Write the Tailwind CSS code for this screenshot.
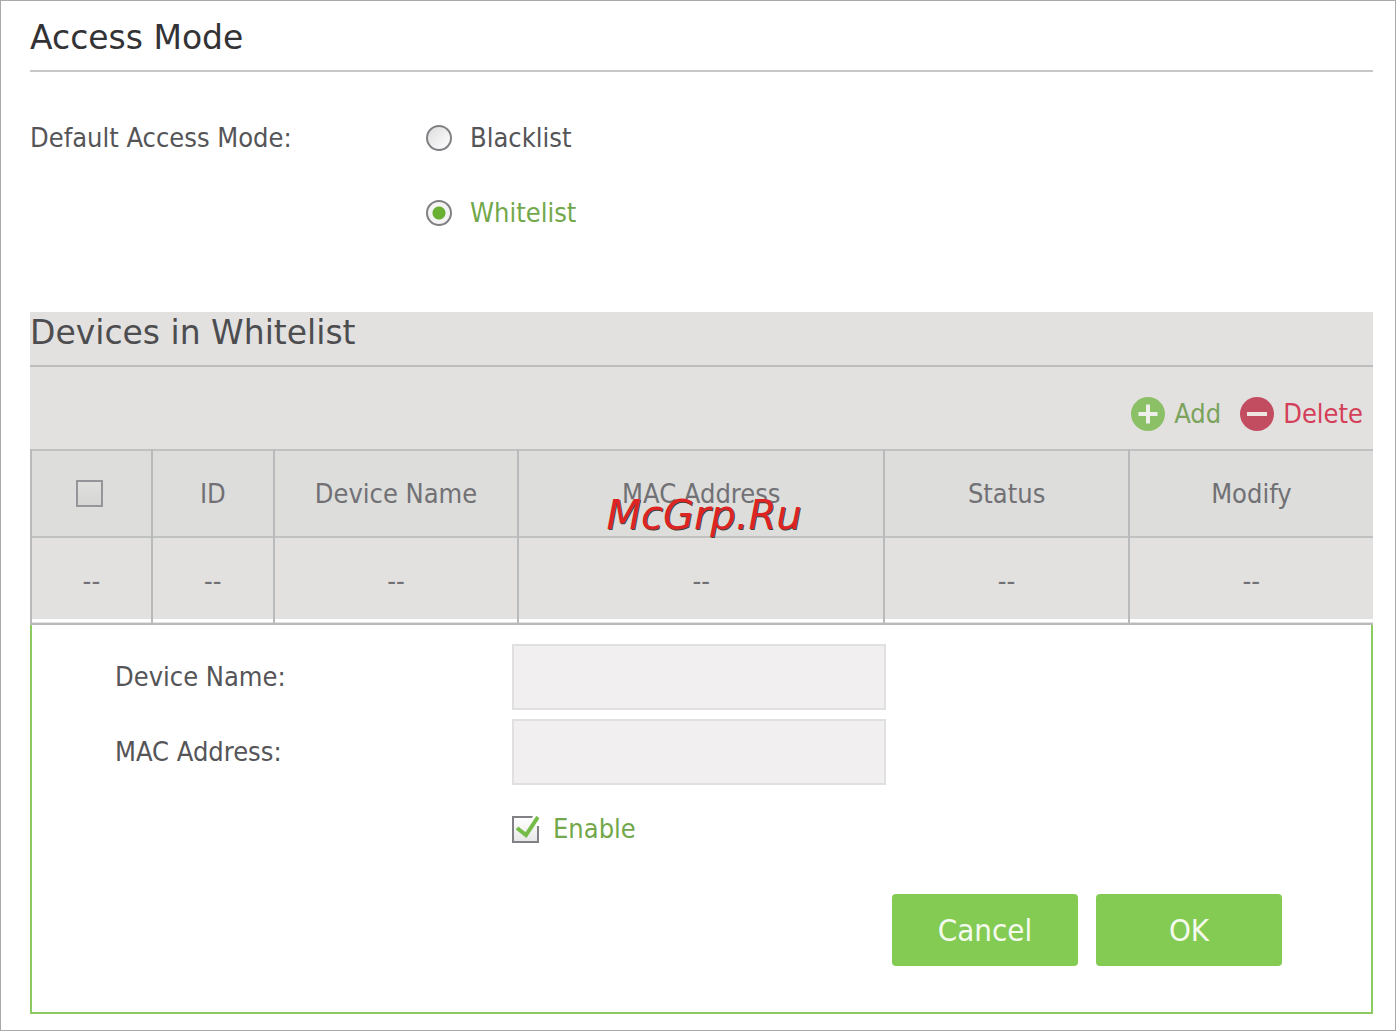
<!doctype html>
<html lang="en">

<head>
    <meta charset="UTF-8">
    <meta name="viewport" content="width=device-width, initial-scale=1.0">
    <script src="https://cdn.jsdelivr.net/npm/@tailwindcss/browser@4"></script>
    <title>Access Mode</title>
</head>

<body class="bg-white font-['DejaVu_Sans_Condensed','DejaVu_Sans',sans-serif] text-[27px] leading-8 text-[#555558]">
    <main class="relative min-h-screen border border-[#aaaaaa] pl-[29px] pr-[22px] pt-[17px] pb-3">
        <!-- Access Mode -->
        <h1 class="border-b-2 border-[#c8c8c8] pb-3 font-['DejaVu_Sans',sans-serif] text-[33px] leading-10 text-[#333336]">Access Mode</h1>
        <div role="radiogroup" aria-labelledby="modeLabel" class="flex pt-[50px]">
            <div id="modeLabel" class="w-[396px] shrink-0">Default Access Mode:</div>
            <div class="flex flex-col gap-[43px]">
                <label class="flex items-center gap-[18px]">
                    <input type="radio" name="mode" class="size-[26px] appearance-none rounded-full border-2 border-[#808085] bg-linear-to-br from-[#dddddd] to-white checked:bg-[radial-gradient(circle,#69b033_6px,#f4f4f4_7px)]">
                    Blacklist
                </label>
                <label class="flex items-center gap-[18px] text-[#72a84b]">
                    <input type="radio" name="mode" checked class="size-[26px] appearance-none rounded-full border-2 border-[#808085] bg-linear-to-br from-[#dddddd] to-white checked:bg-[radial-gradient(circle,#69b033_6px,#f4f4f4_7px)]">
                    Whitelist
                </label>
            </div>
        </div>

        <!-- Devices in Whitelist -->
        <section class="mt-[83px] bg-[#e2e1df]">
            <h2 class="border-b-2 border-[#bbbdbe] pb-3 pt-px font-['DejaVu_Sans',sans-serif] text-[33px] leading-10 text-[#4d4d50]">Devices in Whitelist</h2>
            <div class="flex justify-end gap-[19px] pb-[18px] pr-[10px] pt-[30px]">
                <button type="button" class="flex items-center gap-[9px] text-[#7ba35c]">
                    <svg class="size-[34px]" viewBox="0 0 34 34">
                        <circle cx="17" cy="17" r="17" fill="#8bc067" />
                        <path d="M17 7.5v19M7.5 17h19" stroke="#eeeeea" stroke-width="4" />
                    </svg>
                    Add
                </button>
                <button type="button" class="flex items-center gap-[9px] text-[#d43e58]">
                    <svg class="size-[34px]" viewBox="0 0 34 34">
                        <circle cx="17" cy="17" r="17" fill="#c34d60" />
                        <path d="M7 17h20" stroke="#eee4e2" stroke-width="4" />
                    </svg>
                    Delete
                </button>
            </div>
            <table class="w-full table-fixed border-collapse text-center text-[#717175]">
                <colgroup>
                    <col class="w-[9%]">
                    <col class="w-[9.1%]">
                    <col class="w-[18.2%]">
                    <col class="w-[27.3%]">
                    <col class="w-[18.2%]">
                    <col class="w-[18.2%]">
                </colgroup>
                <thead>
                    <tr class="h-[87px] border-y-2 border-[#c0c1c1] bg-[#dddddb]">
                        <th class="border-l-2 border-[#b9babc] pr-1 font-normal">
                            <input type="checkbox" aria-label="Select all" class="mx-auto block size-[27px] appearance-none border-2 border-[#939599] bg-linear-to-b from-[#dfdfde] to-[#d5d5d4]">
                        </th>
                        <th class="border-l-2 border-[#b9babc] font-normal">ID</th>
                        <th class="border-l-2 border-[#b9babc] font-normal">Device Name</th>
                        <th class="border-l-2 border-[#b9babc] font-normal">MAC Address</th>
                        <th class="border-l-2 border-[#b9babc] font-normal">Status</th>
                        <th class="border-l-2 border-[#b9babc] font-normal">Modify</th>
                    </tr>
                </thead>
                <tbody>
                    <tr class="h-[87px] border-b-2 border-[#b9babc] bg-[linear-gradient(to_top,white_3px,transparent_3px)]">
                        <td class="border-l-2 border-[#b9babc]">--</td>
                        <td class="border-l-2 border-[#b9babc]">--</td>
                        <td class="border-l-2 border-[#b9babc]">--</td>
                        <td class="border-l-2 border-[#b9babc]">--</td>
                        <td class="border-l-2 border-[#b9babc]">--</td>
                        <td class="border-l-2 border-[#b9babc]">--</td>
                    </tr>
                </tbody>
            </table>
        </section>

        <!-- New device form -->
        <form class="border-2 border-t-0 border-[#8ccb62] pb-[46px] pl-[83px] pr-[89px] pt-[19px]">
            <div class="flex items-center">
                <label for="deviceName" class="w-[397px] shrink-0">Device Name:</label>
                <input type="text" id="deviceName" class="h-[66px] w-[374px] border-2 border-[#e0e0e0] bg-[#f1eff0] px-3">
            </div>
            <div class="mt-[9px] flex items-center">
                <label for="macAddress" class="w-[397px] shrink-0">MAC Address:</label>
                <input type="text" id="macAddress" class="h-[66px] w-[374px] border-2 border-[#e0e0e0] bg-[#f1eff0] px-3">
            </div>
            <label class="ml-[397px] mt-7 flex w-fit items-center gap-[14px] text-[#72a84b]">
                <span class="relative">
                    <input type="checkbox" checked class="peer block size-[27px] appearance-none border-2 border-[#808085] bg-linear-to-b from-white to-[#e8e8e8]">
                    <svg class="absolute inset-0 hidden size-[27px] peer-checked:block" viewBox="0 0 27 27" fill="none">
                        <path d="M21 0h6v10h-3L19 4z" fill="white" />
                        <path d="M5 12l9 7L26 1" stroke="#76bc48" stroke-width="4" />
                    </svg>
                </span>
                Enable
            </label>
            <div class="mt-[49px] flex justify-end gap-[18px] text-[31px] text-[#f4faee]">
                <button type="button" class="h-[72px] w-[186px] rounded bg-[#84cb54]">Cancel</button>
                <button type="submit" class="h-[72px] w-[186px] rounded bg-[#84cb54]">OK</button>
            </div>
        </form>

        <!-- Watermark -->
        <div class="pointer-events-none absolute inset-x-0 top-[490px] pl-3 text-center font-['DejaVu_Sans',sans-serif] text-[40px] italic leading-12 text-[#dd2423] text-shadow-[1px_1px_0_#444444]">McGrp.Ru</div>
    </main>
</body>

</html>
